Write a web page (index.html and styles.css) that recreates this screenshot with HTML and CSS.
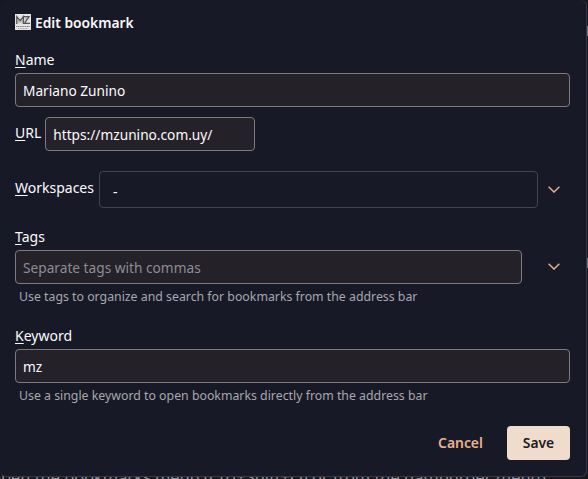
FILE: index.html
```html
<!DOCTYPE html>
<html lang="en">
<head>
<meta charset="utf-8">
<title>Edit bookmark</title>
<link rel="stylesheet" href="styles.css">
</head>
<body>
<p class="backdrop-text">open the bookmarks menu (Ctrl+Shift+O) or from the hamburger menu)</p>
<span class="backdrop-mark mark-top"></span>
<span class="backdrop-mark mark-middle"></span>
<form class="panel">
  <header class="heading">
    <svg class="favicon" viewBox="0 0 16 16" aria-hidden="true">
      <path fill="#e5e5e3" d="M0 0h16v16H0z"/>
      <path fill="none" stroke="#555" stroke-width="1.3" d="M1.8 10V2.7l3.4 4 3.2-4V10M8.8 2.7H14L9.5 9.4H15"/>
      <path fill="none" stroke="#999" stroke-width=".7" d="M3.2 9.5V5.5l2 3L7.2 6v3.5M9.5 4.2h2.3L8.8 9"/>
      <path stroke="#888" stroke-width="1" stroke-dasharray="1.3 .5" d="M1 12.5h14"/>
      <path stroke="#aaa" stroke-width="1" stroke-dasharray="1 .6" d="M3 14.5h10"/>
    </svg>
    <h1>Edit bookmark</h1>
  </header>
  <label class="label" for="name"><span class="key">N</span>ame</label>
  <input class="field" id="name" value="Mariano Zunino">
  <div class="row url-row">
    <label class="label" for="url"><span class="key">U</span>RL</label>
    <input class="field" id="url" value="https://mzunino.com.uy/">
  </div>
  <div class="row workspace-row">
    <label class="label"><span class="key">W</span>orkspaces</label>
    <div class="select">-</div>
    <svg class="chevron" viewBox="0 0 12 7" aria-hidden="true"><path d="M.6.7 6 6 11.4.7"/></svg>
  </div>
  <label class="label" for="tags"><span class="key">T</span>ags</label>
  <div class="row tags-row">
    <input class="field" id="tags" placeholder="Separate tags with commas">
    <svg class="chevron" viewBox="0 0 12 7" aria-hidden="true"><path d="M.6.7 6 6 11.4.7"/></svg>
  </div>
  <p class="hint tags-hint">Use tags to organize and search for bookmarks from the address bar</p>
  <label class="label" for="keyword"><span class="key">K</span>eyword</label>
  <input class="field" id="keyword" value="mz">
  <p class="hint keyword-hint">Use a single keyword to open bookmarks directly from the address bar</p>
  <footer class="actions">
    <button class="button cancel" type="button">Cancel</button>
    <button class="button save" type="button">Save</button>
  </footer>
</form>
</body>
</html>
```
FILE: styles.css
```css
* { box-sizing: border-box; }
body {
  position: relative;
  margin: 0;
  height: 479px;
  overflow: hidden;
  background: #19171b;
  color: #fbfbfe;
  font: 14px/20px "Noto Sans", sans-serif;
}
.panel {
  position: relative;
  width: 587px;
  height: 477px;
  padding: 13px 16px 0 15px;
  background: #181926;
  border: solid #363650;
  border-width: 0 1px 1px 0;
  border-radius: 6px;
}
.backdrop-text {
  position: absolute;
  left: -9px;
  top: 465px;
  margin: 0;
  color: #929199;
  font-size: 16.4px;
  line-height: 24px;
  white-space: nowrap;
}
.backdrop-mark { position: absolute; right: 0; width: 1px; height: 10px; background: #77767d; }
.mark-top { top: 26px; }
.mark-middle { top: 258px; }
.heading { display: flex; align-items: center; gap: 4px; height: 20px; margin-bottom: 17px; }
.heading h1 { margin: 0; font-size: 13.8px; font-weight: 600; }
.favicon { width: 16px; height: 16px; margin-top: -2px; }
.label { display: block; height: 20px; white-space: nowrap; }
.key { text-decoration: underline; text-decoration-thickness: 1px; text-underline-offset: 2px; }
.field {
  display: block;
  width: 555px;
  height: 34px;
  margin: 3px 0 0;
  padding: 0 7px;
  border: 1px solid #7d7b82;
  border-radius: 4px;
  background: #242129;
  color: #fbfbfe;
  font: inherit;
  font-size: 13.7px;
}
.field::placeholder { color: #8e8d94; opacity: 1; }
.row { display: flex; }
.url-row { gap: 4px; margin-top: 10px; height: 34px; }
.url-row .label { margin-top: 6px; }
.url-row .field { width: 210px; margin: 0; }
.workspace-row { gap: 5px; height: 37px; margin: 20px 0 19px; }
.workspace-row .label { margin-top: 7px; }
.select { width: 439px; padding: 10px 13px 6px; border: 1px solid #45434f; border-radius: 4px; }
.chevron { flex: none; width: 12px; height: 7px; margin: 15px 0 0 5px; fill: none; stroke: #e4ad8b; stroke-width: 1.5; }
.tags-row .field { width: 507px; }
.tags-row .chevron { margin: 16px 0 0 26px; }
.hint { height: 20px; margin: 3px 0 0 4px; color: #a7a7ae; font-size: 12.32px; }
.tags-hint { margin-bottom: 19px; }
.actions { display: flex; justify-content: flex-end; gap: 8px; margin-top: 20px; }
.button { height: 34px; border: 0; border-radius: 4px; padding: 0 0 1px; background: transparent; font: 600 13.9px/20px "Noto Sans", sans-serif; }
.cancel { width: 77px; color: #e8b38f; }
.save { width: 63px; background: #f0dccd; color: #1c1b22; }
```
